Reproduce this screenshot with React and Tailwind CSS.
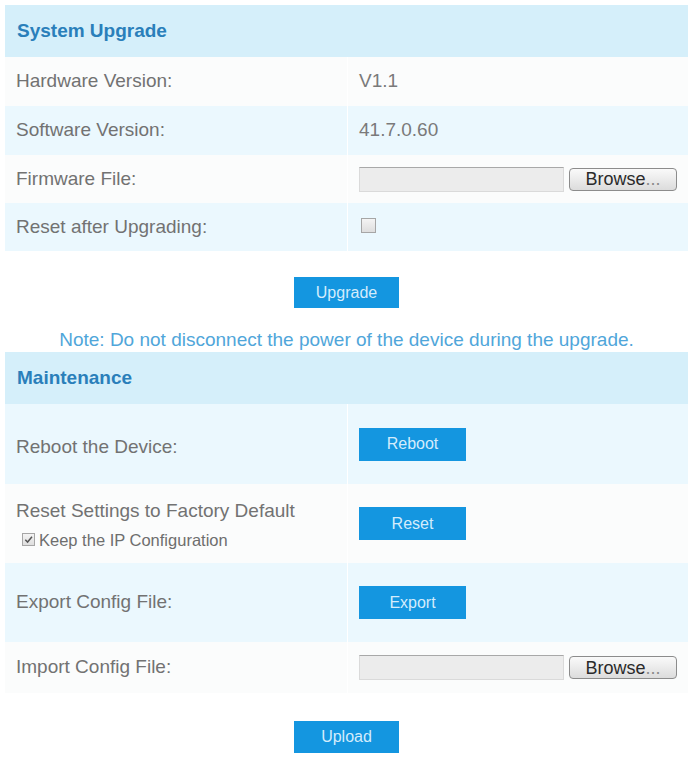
import React from "react";

const font = "font-['Liberation_Sans',Arial,sans-serif]";

function SectionHeader({ children }) {
  return (
    <div className="h-[52px] bg-[#d5effa] flex items-center pl-[12px] text-[19px] font-bold text-[#2a7fba]">
      {children}
    </div>
  );
}

function Row({ tint, height, label, children }) {
  return (
    <div
      className={`flex ${tint ? "bg-[#ebf8fe]" : "bg-[#fbfcfc]"}`}
      style={{ height }}
    >
      <div className="w-[343px] shrink-0 flex items-center pl-[11px] border-r border-white text-[19px] text-[#727272]">
        {label}
      </div>
      <div className="flex-1 flex items-center pl-[11px] text-[19px] text-[#7a7a7a]">
        {children}
      </div>
    </div>
  );
}

function BlueButton({ children }) {
  return (
    <div className="w-[107px] h-[33px] bg-[#1496e0] flex items-center justify-center text-[16px] text-[#d3ecfc]">
      {children}
    </div>
  );
}

function FileField() {
  return (
    <div className="flex items-center gap-[5px]">
      <div className="w-[205px] h-[25px] bg-[#ececec] border border-[#dadada] border-t-[#a8a8a8]" />
      <div className="w-[108px] h-[23px] rounded-[4px] border border-[#8c8c8c] bg-gradient-to-b from-[#fafafa] to-[#dcdcdc] flex items-center justify-center text-[18px] leading-none text-[#2a2a2a]">
        Browse<span className="text-[#8a8a8a]">...</span>
      </div>
    </div>
  );
}

function Checkbox({ checked, size }) {
  return (
    <span
      className="inline-flex items-center justify-center border border-[#a6a6a6] bg-gradient-to-b from-[#f4f4f4] to-[#dedede] shrink-0"
      style={{ width: size, height: size }}
    >
      {checked && (
        <svg viewBox="0 0 12 12" className="w-full h-full">
          <path d="M2.5 6.2 L5 8.8 L9.8 3" fill="none" stroke="#555" strokeWidth="1.6" />
        </svg>
      )}
    </span>
  );
}

export default function App() {
  return (
    <div className={`w-[692px] h-[759px] bg-white pt-[5px] pl-[5px] ${font}`}>
      <div className="w-[683px]">
        <SectionHeader>System Upgrade</SectionHeader>
        <Row height={49} label="Hardware Version:">V1.1</Row>
        <Row height={49} tint label="Software Version:">41.7.0.60</Row>
        <Row height={48} label="Firmware File:">
          <FileField />
        </Row>
        <Row height={48} tint label="Reset after Upgrading:">
          <span className="ml-[2px]">
            <Checkbox size={15} />
          </span>
        </Row>

        <div className="h-[101px] flex flex-col items-center pt-[26px]">
          <div className="w-[105px] h-[31px] bg-[#1496e0] flex items-center justify-center text-[16px] text-[#d3ecfc]">
            Upgrade
          </div>
          <div className="mt-[21px] text-[19px] leading-[22px] text-[#50a6da]">
            Note: Do not disconnect the power of the device during the upgrade.
          </div>
        </div>

        <SectionHeader>Maintenance</SectionHeader>
        <Row height={80} tint label={<span className="pt-[6px]">Reboot the Device:</span>}>
          <BlueButton>Reboot</BlueButton>
        </Row>
        <Row
          height={79}
          label={
            <div className="flex flex-col">
              <span className="leading-[29px]">Reset Settings to Factory Default</span>
              <span className="flex items-center gap-[4px] pl-[6px] pt-[3px] text-[16.5px] leading-[24px] text-[#6e6e6e]">
                <Checkbox checked size={13} />
                Keep the IP Configuration
              </span>
            </div>
          }
        >
          <BlueButton>Reset</BlueButton>
        </Row>
        <Row height={79} tint label="Export Config File:">
          <BlueButton>Export</BlueButton>
        </Row>
        <Row height={51} label="Import Config File:">
          <FileField />
        </Row>

        <div className="flex justify-center pt-[28px]">
          <div className="w-[105px] h-[32px] bg-[#1496e0] flex items-center justify-center text-[16px] text-[#d3ecfc]">
            Upload
          </div>
        </div>
      </div>
    </div>
  );
}
